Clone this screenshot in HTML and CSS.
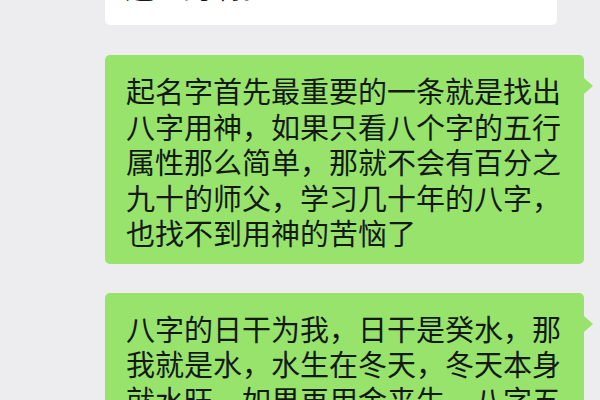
FILE: index.html
```html
<!DOCTYPE html>
<html lang="zh-CN">
<head>
<meta charset="utf-8">
<title>聊天记录</title>
<link rel="stylesheet" href="styles.css">
</head>
<body>
<div class="chat">
  <div class="bubble white">道理的啊。</div>
  <div class="bubble green">起名字首先最重要的一条就是找出八字用神，如果只看八个字的五行属性那么简单，那就不会有百分之九十的师父，学习几十年的八字，也找不到用神的苦恼了</div>
  <div class="bubble green">八字的日干为我，日干是癸水，那我就是水，水生在冬天，冬天本身就水旺，如果再用金来生，八字五行就更加失衡了</div>
</div>
</body>
</html>
```
FILE: styles.css
```css
html, body {
  margin: 0;
  padding: 0;
  background: #ededef;
  width: 600px;
  height: 400px;
  overflow: hidden;
}
.chat {
  display: flex;
  flex-direction: column;
  align-items: flex-start;
  gap: 29px;
  padding-left: 105px;
  margin-top: -31px;
  font-family: "Noto Sans CJK SC", "Noto Sans", sans-serif;
  font-size: 29px;
  line-height: 35.5px;
  color: #141a12;
}
.bubble {
  position: relative;
  box-sizing: border-box;
  border-radius: 5px;
}
.white {
  background: #ffffff;
  width: 452px;
  height: 56px;
  padding: 0 20px;
  margin-bottom: 1px;
}
.green {
  background: #97e36b;
  width: 479px;
  padding: 18px 18px 13px 21px;
}
.green::after {
  content: "";
  position: absolute;
  right: -9px;
  top: 23px;
  border-left: 9px solid #97e36b;
  border-top: 8px solid transparent;
  border-bottom: 8px solid transparent;
}
```
